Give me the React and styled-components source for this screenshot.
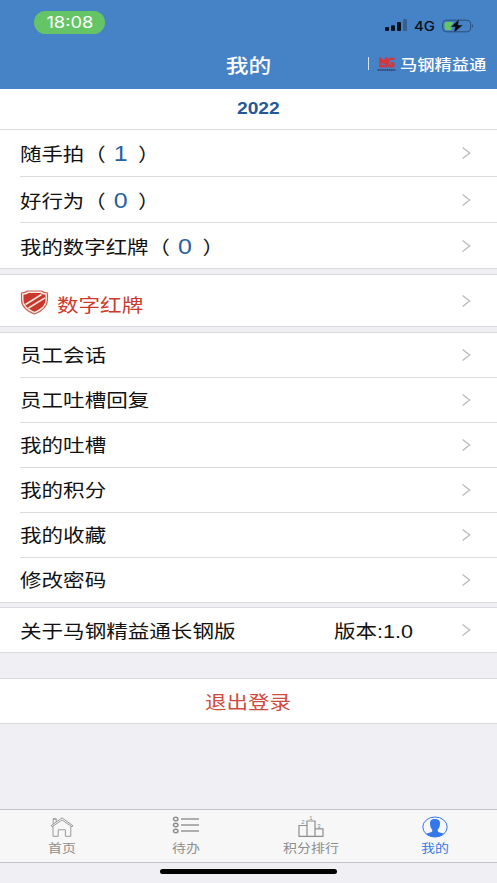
import styled, { createGlobalStyle } from 'styled-components';

const GlobalStyle = createGlobalStyle`
  * {
    box-sizing: border-box;
  }

  body {
    margin: 0;
    background: #efeff4;
    font-family: "Liberation Sans", "Noto Sans CJK SC", sans-serif;
  }
`;

const Screen = styled.div`
  width: 497px;
  height: 883px;
  display: flex;
  flex-direction: column;
  overflow: hidden;
  background: #efeff4;
`;

const Header = styled.header`
  height: 89px;
  flex: none;
  background: #4682c6;
  color: #ffffff;
`;

const StatusBar = styled.div`
  height: 46px;
  display: flex;
  justify-content: space-between;
  padding: 11px 23px 0 34px;
`;

const Wide = styled.span`
  display: inline-block;
  white-space: nowrap;
  transform: scaleX(${(props) => props.$scale || 1.165});
  transform-origin: ${(props) => props.$origin || 'left'} center;
`;

const Clock = styled.div`
  width: 71px;
  height: 23px;
  display: flex;
  align-items: center;
  justify-content: center;
  border-radius: 12px;
  background: #65c466;
  font: 400 15.5px/23px Inter, sans-serif;
`;

const StatusIcons = styled.div`
  display: flex;
  align-items: flex-start;
  padding-top: 8px;

  svg {
    display: block;
  }
`;

const Network = styled.div`
  width: 35px;
  padding-left: 7px;
  color: #0b1118;
  font: 500 13px/15px Inter, sans-serif;
`;

const TitleBar = styled.div`
  height: 43px;
  display: grid;
  grid-template-columns: 1fr 130px 1fr;
`;

const Title = styled.h1`
  grid-column: 2;
  margin: 0;
  padding-top: 6px;
  text-align: center;
  font-size: 19.5px;
  line-height: 28px;
  font-weight: 500;
`;

const Brand = styled.div`
  display: flex;
  align-items: flex-start;
  padding: 9px 0 0 54px;
  font-size: 15px;
  line-height: 20px;
  font-weight: 500;

  svg {
    flex: none;
    margin: 2px 4px 0 0;
  }
`;

const Divider = styled.i`
  width: 1px;
  height: 13px;
  flex: none;
  margin: 2px 8px 0 0;
  background: #d4e2f3;
`;

const Year = styled.div`
  height: 40px;
  flex: none;
  padding-left: 20px;
  background: #ffffff;
  color: #245896;
  text-align: center;
  font-size: 16.5px;
  line-height: 39px;
  font-weight: 700;
`;

const Group = styled.section`
  flex: none;
  margin-bottom: ${(props) => props.$gap}px;
  border-top: 1px solid #d9d9dd;
  border-bottom: 1px solid #d9d9dd;
  background: #ffffff;
`;

const Row = styled.div`
  height: ${(props) => props.$height || 45}px;
  display: flex;
  align-items: center;
  padding-right: 26px;
  margin-left: 20px;
  color: #111111;
  font-size: 18.5px;
  line-height: 28px;

  & + & {
    border-top: 1px solid #dcdcde;
  }

  svg {
    flex: none;
  }
`;

const Label = styled.div`
  flex: 1;
  padding-top: ${(props) => props.$drop || 2}px;
`;

const RedLabel = styled(Label)`
  margin-left: 8px;
  color: #cd3a2b;
`;

const ShieldBox = styled.div`
  display: flex;
  padding-top: 4px;
`;

const Version = styled.div`
  width: 127px;
  padding-top: 3px;
`;

const Count = styled.b`
  margin: 0 9px 0 7px;
  color: #285f9f;
  font-size: 21.5px;
  line-height: 20px;
  font-weight: 400;
`;

const Logout = styled.button`
  width: 100%;
  height: 44px;
  display: block;
  padding: 3px 0 0;
  border: 0;
  background: #ffffff;
  color: #d04a40;
  font: 18.5px/28px "Liberation Sans", "Noto Sans CJK SC", sans-serif;
`;

const TabBar = styled.nav`
  height: 54px;
  flex: none;
  display: grid;
  grid-template-columns: repeat(4, 1fr);
  margin-top: auto;
  border-top: 1px solid #c3c3cc;
  border-bottom: 1px solid #c3c3cc;
  background: #f7f7f7;
`;

const Tab = styled.div`
  display: flex;
  flex-direction: column;
  align-items: center;
  padding-top: 6px;
  color: ${(props) => (props.$active ? '#3478e8' : '#8e8e8e')};
  font-size: 12px;
  line-height: 16px;

  svg {
    display: block;
    margin-bottom: 3px;
  }
`;

const HomeArea = styled.div`
  height: 20px;
  flex: none;
  display: flex;
  justify-content: center;
  padding-top: 6px;

  &::after {
    content: '';
    width: 177px;
    height: 5px;
    border-radius: 3px;
    background: #000000;
  }
`;

const Chevron = () => (
  <svg width="10" height="14" viewBox="0 0 10 14" fill="none" stroke="#b7b7bb" strokeWidth="1.2">
    <path d="M1.5 1.5 8.7 7 1.5 12.5" />
  </svg>
);

const Signal = () => (
  <svg width="22" height="12" viewBox="0 0 22 12" fill="#0b1118">
    <rect x="0" y="8" width="4" height="4" rx="1" />
    <rect x="6" y="6.3" width="4" height="5.7" rx="1" />
    <rect x="12" y="3" width="4" height="9" rx="1" />
    <rect x="18" y="0" width="4" height="12" rx="1" opacity=".3" />
  </svg>
);

const Battery = () => (
  <svg width="32" height="14" viewBox="0 0 32 14" fill="none">
    <rect x=".7" y="1.2" width="28" height="11.6" rx="3.6" stroke="#2b4f79" />
    <path d="M4.5 3H11L9.3 11H4.5Q2.5 11 2.5 9V5Q2.5 3 4.5 3" fill="#65c466" />
    <path d="M30 5q2 2 0 4" fill="#2b4f79" />
    <path d="M17.3 0 8.5 8H13l-1.2 6L21 6h-4.8L17.3 0z" fill="#080d12" stroke="#4682c6" strokeWidth=".5" />
  </svg>
);

const BrandLogo = () => (
  <svg width="19" height="15" viewBox="0 0 19 15" fill="none">
    <path d="M3.4 10.500V2.200L6.800 5.500 9.200 2v8.500M6.200 8v2.500" stroke="#d8353b" strokeWidth="2.700" />
    <path d="M17.500 1.800h-4.200L11 4v3.400l2 2h3.300V6.500h-2.800" stroke="#d8353b" strokeWidth="2.300" />
    <path d="M.5 12.900h18" stroke="#303e60" strokeWidth="1.500" strokeDasharray="1.5 .4" />
  </svg>
);

const Shield = () => (
  <svg width="29" height="25" viewBox="0 0 29 25" fill="none">
    <path d="M7.500 1h14c1.500 1.200 3.300 1.800 6 2v6.500c0 7-6 11.800-13 14.500-7-2.700-13-7.500-13-14.500V3c2.700-.2 4.500-.8 6-2z" fill="#fbe9e5" stroke="#c9604f" strokeWidth="1.200" />
    <path d="M8.500 3h12c1.300 1 2.700 1.600 5 1.800v5c0 5.500-5 9.500-11 12-6-2.500-11-6.500-11-12v-5C5.800 4.600 7.200 4 8.500 3z" fill="#c7392a" />
    <path d="M5.500 14.500 21.500 4.500M8.500 18 25 7.800" stroke="#fae5df" strokeWidth="1.500" />
  </svg>
);

const HomeIcon = () => (
  <svg width="24" height="22" viewBox="0 0 24 22" fill="none" stroke="currentColor" strokeWidth=".9">
    <path d="M1 9.800 12 1.800l11 8-1 1L12 4 2 10.800zM3.200 7.800V3h3v2.700M2.800 2.800h3.800M3 10.500v9.800h5.200v-6.500h7.200v6.500h5.400v-9.800" />
  </svg>
);

const TodoIcon = () => (
  <svg width="28" height="22" viewBox="0 0 28 22" fill="none" stroke="currentColor" strokeWidth="1.400">
    {[3, 9, 15].map((y) => (
      <g key={y}>
        <ellipse cx="3.700" cy={y} rx="2.300" ry="1.800" />
        <path d={`M9 ${y}h18`} />
      </g>
    ))}
  </svg>
);

const RankIcon = () => (
  <svg width="26" height="22" viewBox="0 0 26 22" fill="none" stroke="currentColor" strokeWidth="1.200">
    <path d="M1 20.400V9.500h8v10.900zM9 20.400V5h8v15.400zM17 20.400v-7.600h8v7.600z" />
    <g fill="currentColor" stroke="none" fontSize="6">
      <text x="3.300" y="8.300">2</text>
      <text x="11.300" y="4.300">1</text>
      <text x="19.300" y="11.500">3</text>
    </g>
  </svg>
);

const ProfileIcon = () => (
  <svg width="26" height="22" viewBox="0 0 26 22" fill="none">
    <ellipse cx="13" cy="11" rx="12.200" ry="10" stroke="currentColor" />
    <path d="M8 7.300C8 4 9.800 3 13 3s5 1.200 5 4.300c0 3-.8 5.200-2.200 6.200v2c1 1 4.600 1.200 6 2.500C19.600 20.200 16.500 21 13 21s-6.600-.8-8.800-3c1.400-1.300 5-1.500 6-2.500v-2C8.800 12.500 8 10.300 8 7.300z" fill="currentColor" />
  </svg>
);

const counts = [
  { title: '随手拍', count: 1 },
  { title: '好行为', count: 0 },
  { title: '我的数字红牌', count: 0 },
];

const links = ['员工会话', '员工吐槽回复', '我的吐槽', '我的积分', '我的收藏', '修改密码'];

const tabs = [
  { title: '首页', Icon: HomeIcon },
  { title: '待办', Icon: TodoIcon },
  { title: '积分排行', Icon: RankIcon },
  { title: '我的', Icon: ProfileIcon, active: true },
];

const App = () => {
  return (
    <>
      <GlobalStyle />
      <Screen>
        <Header>
          <StatusBar>
            <Clock>
              <Wide $scale={1.18} $origin="center">18:08</Wide>
            </Clock>
            <StatusIcons>
              <Signal />
              <Network>
                <Wide $scale={1.15}>4G</Wide>
              </Network>
              <Battery />
            </StatusIcons>
          </StatusBar>
          <TitleBar>
            <Title>
              <Wide $origin="center">我的</Wide>
            </Title>
            <Brand>
              <Divider />
              <BrandLogo />
              <Wide $scale={1.15}>马钢精益通</Wide>
            </Brand>
          </TitleBar>
        </Header>

        <Year>
          <Wide $origin="center">2022</Wide>
        </Year>

        <Group $gap={5}>
          {counts.map((item) => (
            <Row key={item.title} $height={46}>
              <Label $drop={4}>
                <Wide $scale={1.158}>
                  {item.title}（<Count>{item.count}</Count>）
                </Wide>
              </Label>
              <Chevron />
            </Row>
          ))}
        </Group>

        <Group $gap={5}>
          <Row $height={51}>
            <ShieldBox>
              <Shield />
            </ShieldBox>
            <RedLabel $drop={10}>
              <Wide>数字红牌</Wide>
            </RedLabel>
            <Chevron />
          </Row>
        </Group>

        <Group $gap={4}>
          {links.map((title, index) => (
            <Row key={title} $height={index === 0 ? 44 : 45}>
              <Label>
                <Wide>{title}</Wide>
              </Label>
              <Chevron />
            </Row>
          ))}
        </Group>

        <Group $gap={25}>
          <Row $height={44}>
            <Label $drop={3}>
              <Wide>关于马钢精益通长钢版</Wide>
            </Label>
            <Version>
              <Wide>版本:1.0</Wide>
            </Version>
            <Chevron />
          </Row>
        </Group>

        <Group $gap={0}>
          <Logout>
            <Wide $origin="center">退出登录</Wide>
          </Logout>
        </Group>

        <TabBar>
          {tabs.map(({ title, Icon, active }) => (
            <Tab key={title} $active={active}>
              <Icon />
              <Wide $origin="center">{title}</Wide>
            </Tab>
          ))}
        </TabBar>
        <HomeArea />
      </Screen>
    </>
  );
};

export default App;
